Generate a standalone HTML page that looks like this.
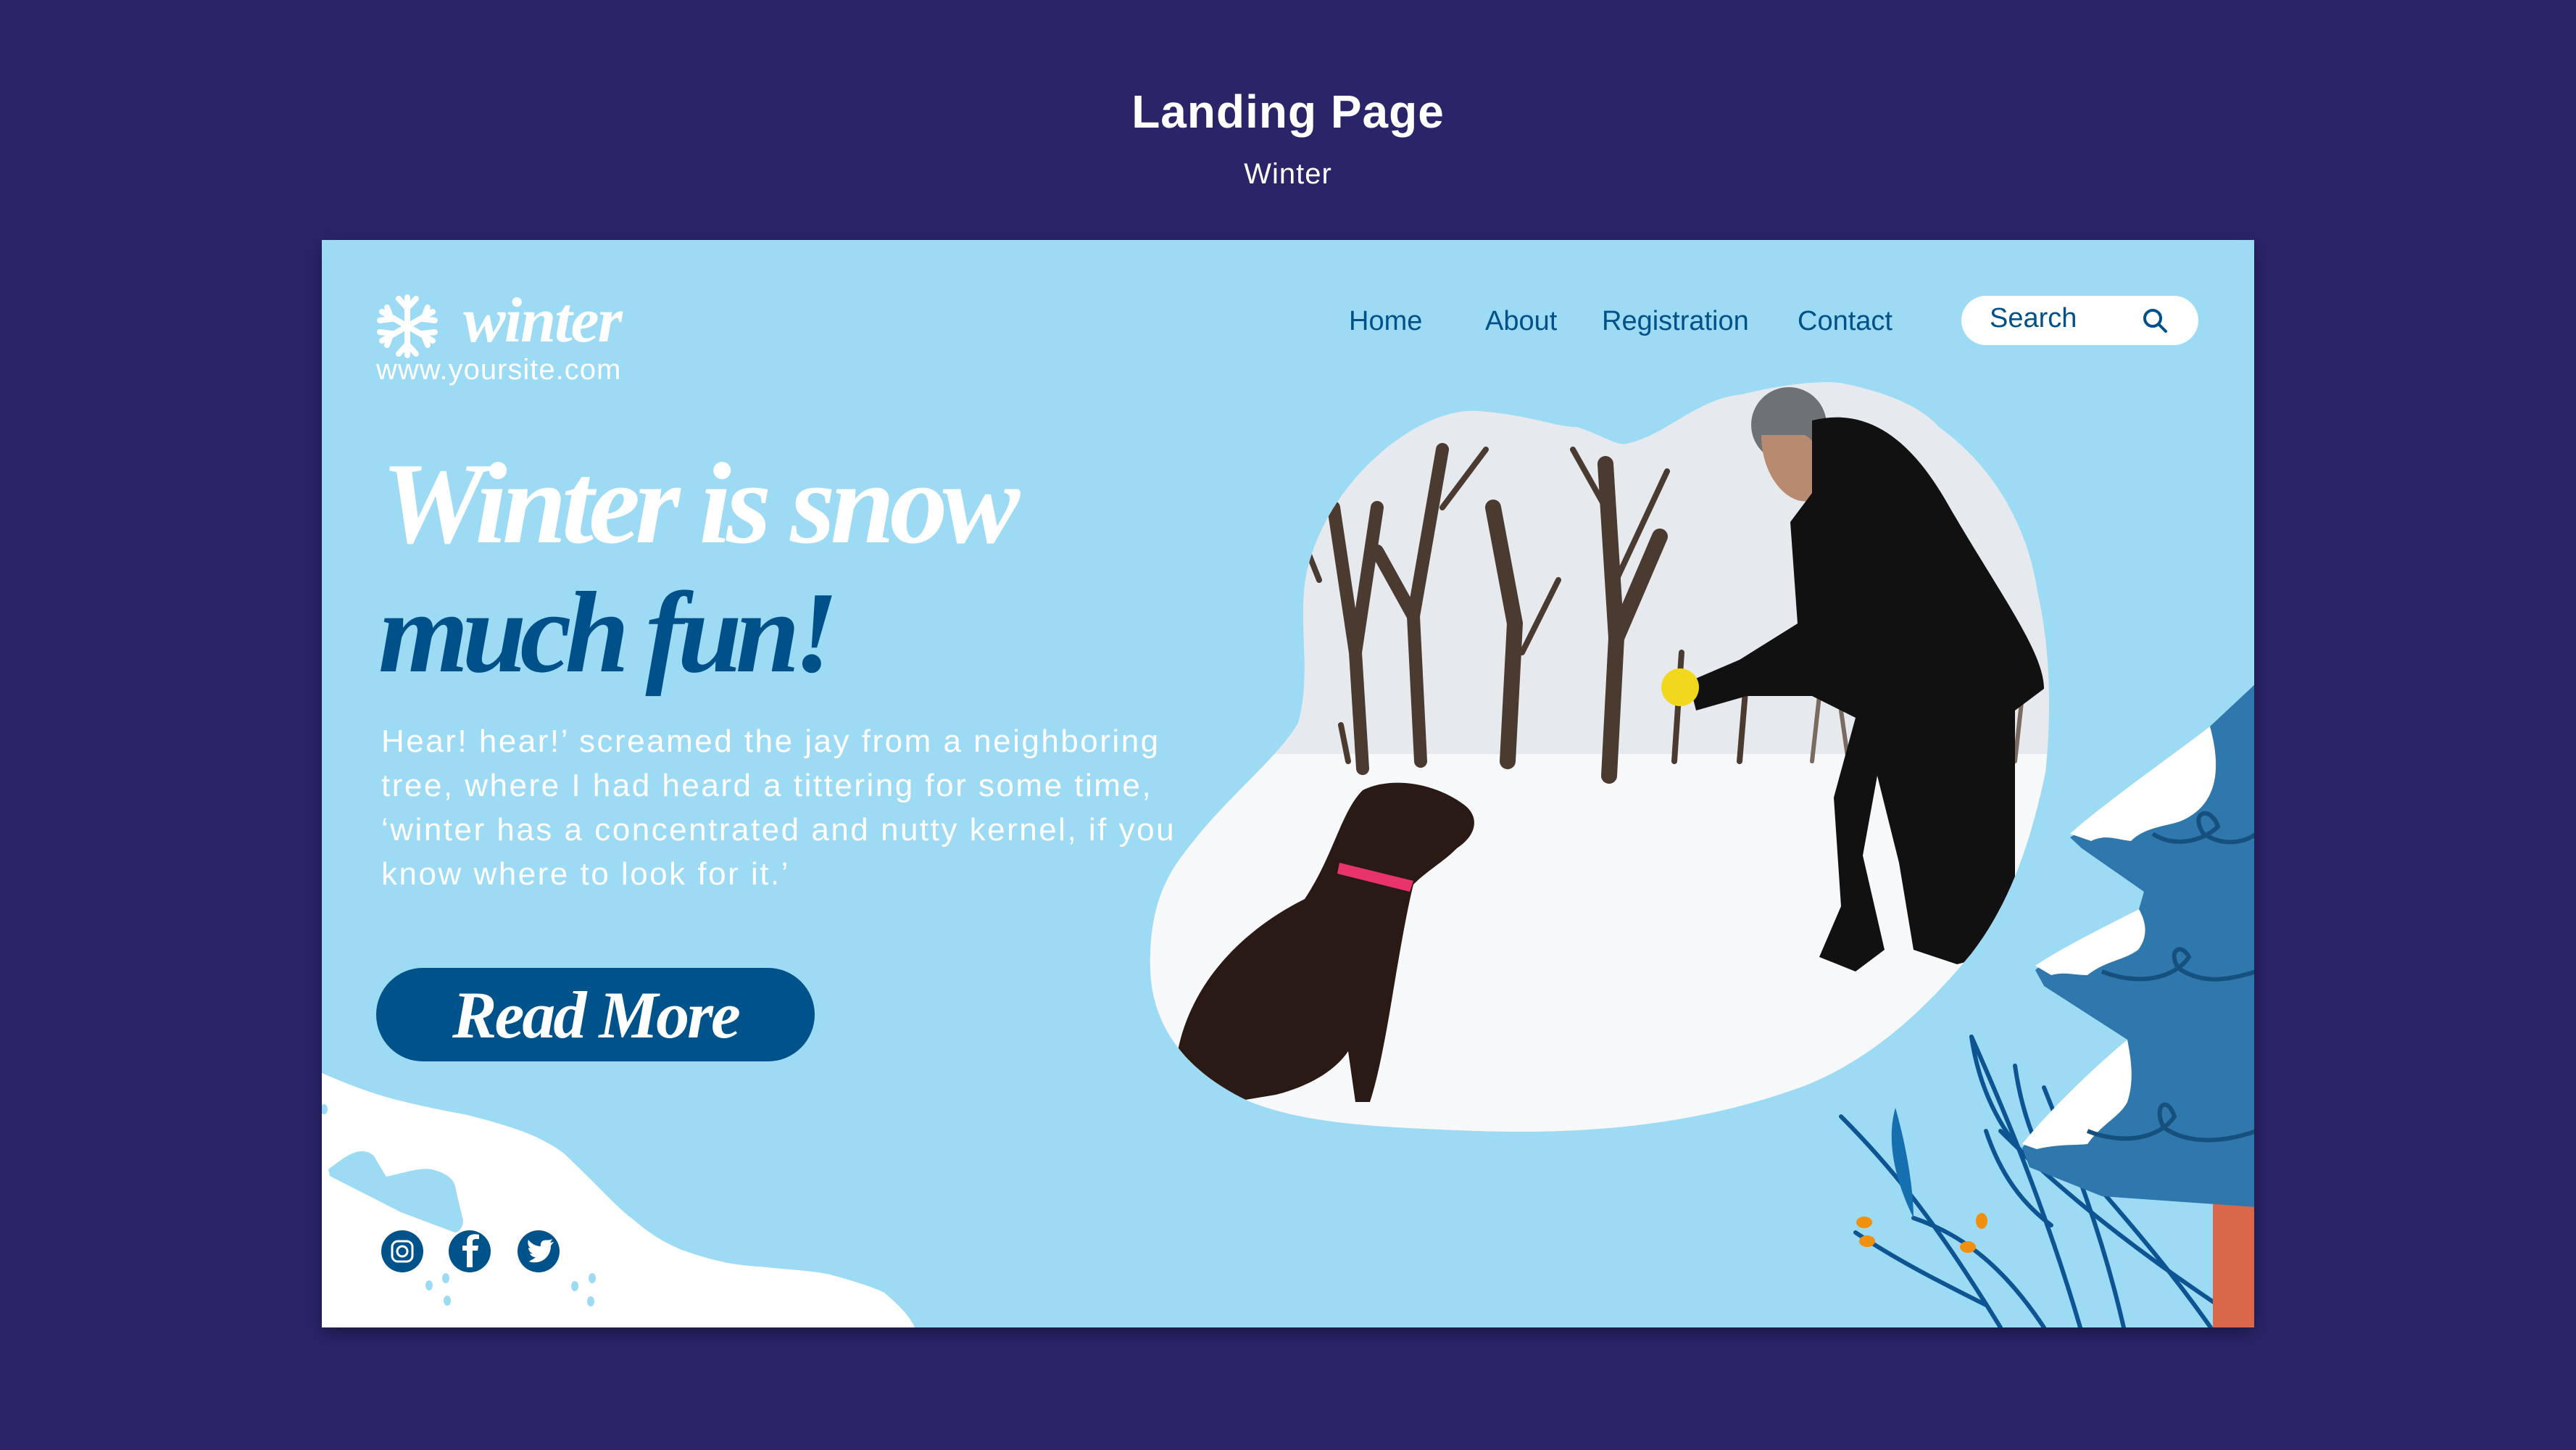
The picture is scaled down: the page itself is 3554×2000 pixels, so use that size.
<!DOCTYPE html>
<html><head><meta charset="utf-8"><style>
html,body{margin:0;padding:0;}
body{width:3554px;height:2000px;background:#2a2569;position:relative;overflow:hidden;font-family:"Liberation Sans",sans-serif;}
.abs{position:absolute;white-space:nowrap;}
.script{font-family:"Liberation Serif",serif;font-style:italic;font-weight:bold;}
</style></head><body>
<div class="abs" style="left:0;width:3554px;top:117px;text-align:center;color:#fff;font-weight:bold;font-size:64px;letter-spacing:1px;">Landing Page</div>
<div class="abs" style="left:0;width:3554px;top:218px;text-align:center;color:#fff;font-size:40px;letter-spacing:1px;">Winter</div>

<div style="position:absolute;left:444px;top:331px;width:2666px;height:1500px;background:#9ddbf4;overflow:hidden;box-shadow:0 8px 20px rgba(0,0,0,.35);"></div>

<svg class="abs" style="left:0;top:0" width="3554" height="2000" viewBox="0 0 3554 2000">
<defs>
<clipPath id="card"><rect x="444" y="331" width="2666" height="1500"/></clipPath>
<clipPath id="blob"><path d="M1802,793 C1830,660 1960,560 2040,567 C2110,572 2150,590 2176,589 C2210,600 2230,615 2244,612 C2300,600 2340,550 2403,544 C2460,530 2510,525 2539,528 C2600,540 2650,560 2675,589 C2760,650 2800,740 2811,816 C2830,900 2830,990 2822,1065 C2800,1170 2770,1250 2720,1315 C2650,1400 2580,1460 2494,1496 C2350,1550 2200,1565 2040,1560 C1900,1555 1800,1550 1723,1519 C1640,1480 1590,1420 1587,1338 C1585,1270 1600,1220 1632,1179 C1690,1100 1760,1050 1791,997 C1810,930 1790,860 1802,793 Z"/></clipPath>
</defs>
<g clip-path="url(#card)">
<g clip-path="url(#blob)">
<rect x="1580" y="520" width="1260" height="1050" fill="#e6eaee"/>
<rect x="1580" y="1040" width="1260" height="530" fill="#f7f8fa"/>
<g stroke="#4a3a30" fill="none" stroke-linecap="round">
<path d="M1880,1060 L1870,900 L1840,700 M1870,900 L1900,700 M1960,1050 L1950,850 L1990,620 M1950,850 L1900,760" stroke-width="18"/>
<path d="M2220,1070 L2230,880 L2215,640 M2230,880 L2290,740 M2080,1050 L2090,860 L2060,700" stroke-width="22"/>
<path d="M1820,800 L1780,700 M1990,700 L2050,620 M2215,700 L2170,620 M2230,800 L2300,650 M2100,900 L2150,800 M1860,1050 L1850,1000 M2310,1050 L2320,900 M2400,1050 L2410,930" stroke-width="8"/>
<path d="M1650,1040 L1680,900 M1720,1050 L1730,950 M2500,1050 L2510,960 M2550,1050 L2540,980 M2700,1050 L2720,950 M2780,1050 L2790,960" stroke-width="6" stroke="#7a6a60"/>
</g>
<path d="M1620,1500 C1620,1380 1700,1290 1800,1240 C1840,1180 1850,1120 1880,1090 C1920,1070 1980,1080 2020,1110 C2040,1125 2040,1150 2010,1170 C1990,1190 1970,1200 1950,1220 C1940,1260 1930,1320 1920,1380 C1910,1440 1900,1490 1890,1520 L1870,1520 L1860,1450 C1840,1480 1800,1500 1760,1510 L1700,1520 Z" fill="#2a1a16"/>
<path d="M1848,1190 L1950,1215 L1945,1230 L1845,1205 Z" fill="#e8336b"/>
<circle cx="2468" cy="586" r="52" fill="#6f7275"/>
<path d="M2430,600 C2430,660 2470,700 2500,690 C2520,650 2510,610 2490,600 Z" fill="#b88a70"/>
<path d="M2500,580 C2580,560 2640,610 2690,700 C2760,820 2820,900 2820,950 L2780,980 L2780,1250 L2740,1320 L2700,1330 L2640,1310 L2620,1190 L2590,1070 L2570,1180 L2600,1310 L2560,1340 L2510,1320 L2540,1250 L2530,1100 L2560,990 L2500,960 L2410,960 L2340,980 L2330,940 L2400,910 L2480,860 L2470,720 L2500,680 Z" fill="#111"/>
<circle cx="2318" cy="948" r="26" fill="#f2d81c"/>
</g>
<path d="M444,1480 C490,1500 520,1510 547,1517 C600,1530 620,1533 645,1538 C700,1552 720,1560 737,1567 C760,1578 770,1585 777,1590 C830,1640 850,1665 875,1683 C900,1705 920,1715 938,1723 C980,1738 1010,1745 1047,1747 C1100,1752 1130,1754 1145,1758 C1190,1770 1210,1778 1220,1783 C1240,1800 1255,1815 1262,1831 L444,1831 Z" fill="#fff"/>
<path d="M453,1613 C470,1600 485,1588 499,1588 C512,1588 517,1595 519,1600 L533,1623 C560,1617 580,1610 596,1613 C615,1618 625,1625 628,1636 C633,1660 637,1675 639,1683 C639,1693 633,1700 628,1700 C600,1690 575,1680 553,1672 C520,1655 490,1640 455,1622 Z" fill="#9ddbf4"/>
<g fill="#9ddbf4"><ellipse cx="592" cy="1773" rx="5" ry="7"/><ellipse cx="615" cy="1763" rx="5" ry="7"/><ellipse cx="617" cy="1794" rx="5" ry="7"/><ellipse cx="793" cy="1774" rx="5" ry="7"/><ellipse cx="817" cy="1763" rx="5" ry="7"/><ellipse cx="815" cy="1795" rx="5" ry="7"/><ellipse cx="447" cy="1530" rx="5" ry="7"/></g>
<g fill="none" stroke="#0c5592" stroke-width="6" stroke-linecap="round">
<path d="M2540,1540 C2620,1620 2680,1700 2760,1831"/>
<path d="M2640,1680 C2700,1700 2760,1740 2820,1831"/>
<path d="M2720,1430 C2760,1520 2820,1660 2870,1831"/>
<path d="M2820,1500 C2860,1600 2900,1700 2930,1831"/>
<path d="M2760,1560 C2840,1640 2940,1720 3060,1800"/>
<path d="M2880,1620 C2950,1700 3000,1760 3050,1831"/>
<path d="M2560,1700 C2620,1740 2680,1770 2740,1800"/>
<path d="M2720,1430 C2730,1500 2760,1560 2800,1600 M2780,1470 C2790,1540 2810,1580 2820,1600 M2740,1560 C2760,1620 2790,1660 2830,1690"/>
</g>
<path d="M2615,1528 C2630,1580 2640,1640 2640,1680 C2620,1640 2600,1580 2615,1528 Z" fill="#1670b0"/>
<g fill="#f0900e"><ellipse cx="2572" cy="1686" rx="11" ry="8"/><ellipse cx="2576" cy="1712" rx="11" ry="8"/><ellipse cx="2734" cy="1684" rx="8" ry="11"/><ellipse cx="2715" cy="1720" rx="11" ry="8"/></g>
<rect x="3053" y="1660" width="60" height="175" fill="#d9684a"/>
<path d="M3113,942 L3049,1002 C2960,1080 2900,1130 2856,1155 L2872,1170 L2958,1230 L2951,1254 C2880,1290 2830,1320 2808,1338 L2820,1360 L2935,1434 C2860,1500 2810,1560 2790,1583 L2800,1610 L2900,1650 L3113,1665 Z" fill="#2f78ae"/>
<path d="M3049,1002 C3000,1040 2900,1110 2856,1150 L2885,1160 C2905,1150 2920,1158 2940,1160 C2960,1140 2990,1140 3010,1132 C3060,1110 3065,1060 3049,1002 Z" fill="#fff"/>
<path d="M2951,1254 C2900,1280 2840,1310 2808,1332 L2830,1345 C2850,1340 2860,1345 2880,1345 C2905,1325 2930,1325 2950,1310 C2965,1290 2960,1270 2951,1254 Z" fill="#fff"/>
<path d="M2935,1434 C2880,1480 2820,1540 2790,1578 L2810,1585 C2840,1578 2860,1580 2880,1578 C2900,1550 2925,1540 2935,1520 C2945,1490 2940,1460 2935,1434 Z" fill="#fff"/>
<g fill="none" stroke="#16507f" stroke-width="6"><path d="M2970,1150 C3000,1170 3040,1160 3060,1140 C3050,1110 3020,1120 3040,1150 C3070,1170 3100,1160 3113,1150"/><path d="M2900,1340 C2950,1360 3000,1350 3020,1320 C3010,1300 2990,1310 3005,1335 C3040,1360 3080,1350 3113,1340"/><path d="M2880,1560 C2930,1580 2980,1570 3000,1540 C2990,1510 2970,1525 2985,1555 C3020,1580 3070,1575 3113,1560"/></g>
</g>
<circle cx="555" cy="1726" r="29" fill="#00528a"/><rect x="541" y="1712" width="28" height="28" rx="8" fill="none" stroke="#fff" stroke-width="3"/><circle cx="555" cy="1726" r="7" fill="none" stroke="#fff" stroke-width="3"/>
<circle cx="648" cy="1726" r="29" fill="#00528a"/><path d="M652,1748 L652,1725 L659,1725 L660,1718 L652,1718 L652,1713 C652,1710 654,1709 657,1709 L661,1709 L661,1703 C650,1701 644,1704 644,1713 L644,1718 L638,1718 L638,1725 L644,1725 L644,1748 Z" fill="#fff"/>
<circle cx="743" cy="1726" r="29" fill="#00528a"/><path d="M730,1740 C745,1745 760,1735 760,1718 L764,1713 L759,1714 L762,1709 C756,1712 752,1709 748,1712 C745,1715 746,1719 746,1719 C738,1719 732,1714 729,1710 C727,1716 730,1720 732,1722 L729,1721 C729,1725 732,1728 735,1729 L731,1729 C733,1733 736,1734 739,1734 C736,1737 732,1738 730,1740 Z" fill="#fff"/>
<g stroke="#fff" stroke-width="8" stroke-linecap="round" fill="none">
<path d="M562,410 L562,490 M527,430 L597,470 M527,470 L597,430"/>
<path d="M550,412 L562,425 L574,412 M550,488 L562,475 L574,488 M524,442 L540,440 L534,424 M600,458 L584,460 L590,476 M524,458 L540,460 L534,476 M600,442 L584,440 L590,424"/>
</g>
<rect x="2706" y="408" width="327" height="68" rx="34" fill="#fff"/>
<circle cx="2970" cy="439" r="11" fill="none" stroke="#00508a" stroke-width="4"/><path d="M2978,447 L2988,457" stroke="#00508a" stroke-width="4" stroke-linecap="round"/>
</svg>

<div class="abs script" style="left:639px;top:392px;font-size:88px;color:#fff;letter-spacing:-2px;">winter</div>
<div class="abs" style="left:519px;top:488px;font-size:40px;color:#fff;letter-spacing:1px;">www.yoursite.com</div>

<div class="abs" style="left:1861px;top:422px;font-size:38px;color:#00508a;">Home</div>
<div class="abs" style="left:2049px;top:422px;font-size:38px;color:#00508a;">About</div>
<div class="abs" style="left:2210px;top:422px;font-size:38px;color:#00508a;">Registration</div>
<div class="abs" style="left:2480px;top:422px;font-size:38px;color:#00508a;">Contact</div>
<div class="abs" style="left:2745px;top:418px;font-size:38px;color:#00508a;">Search</div>

<div class="abs script" style="left:526px;top:614px;font-size:160px;color:#fff;letter-spacing:-7px;line-height:1;">Winter is snow</div>
<div class="abs script" style="left:522px;top:792px;font-size:160px;color:#00508a;letter-spacing:-9px;line-height:1;">much fun!</div>

<div class="abs" style="left:526px;top:992px;font-size:44px;line-height:61px;color:#fff;letter-spacing:2.5px;">Hear! hear!’ screamed the jay from a neighboring<br>tree, where I had heard a tittering for some time,<br>‘winter has a concentrated and nutty kernel, if you<br>know where to look for it.’</div>

<div class="abs" style="left:519px;top:1335px;width:605px;height:129px;border-radius:65px;background:#00528a;"></div>
<div class="abs script" style="left:519px;top:1340px;width:605px;text-align:center;font-size:92px;color:#fff;line-height:120px;letter-spacing:-3px;">Read More</div>
</body></html>
